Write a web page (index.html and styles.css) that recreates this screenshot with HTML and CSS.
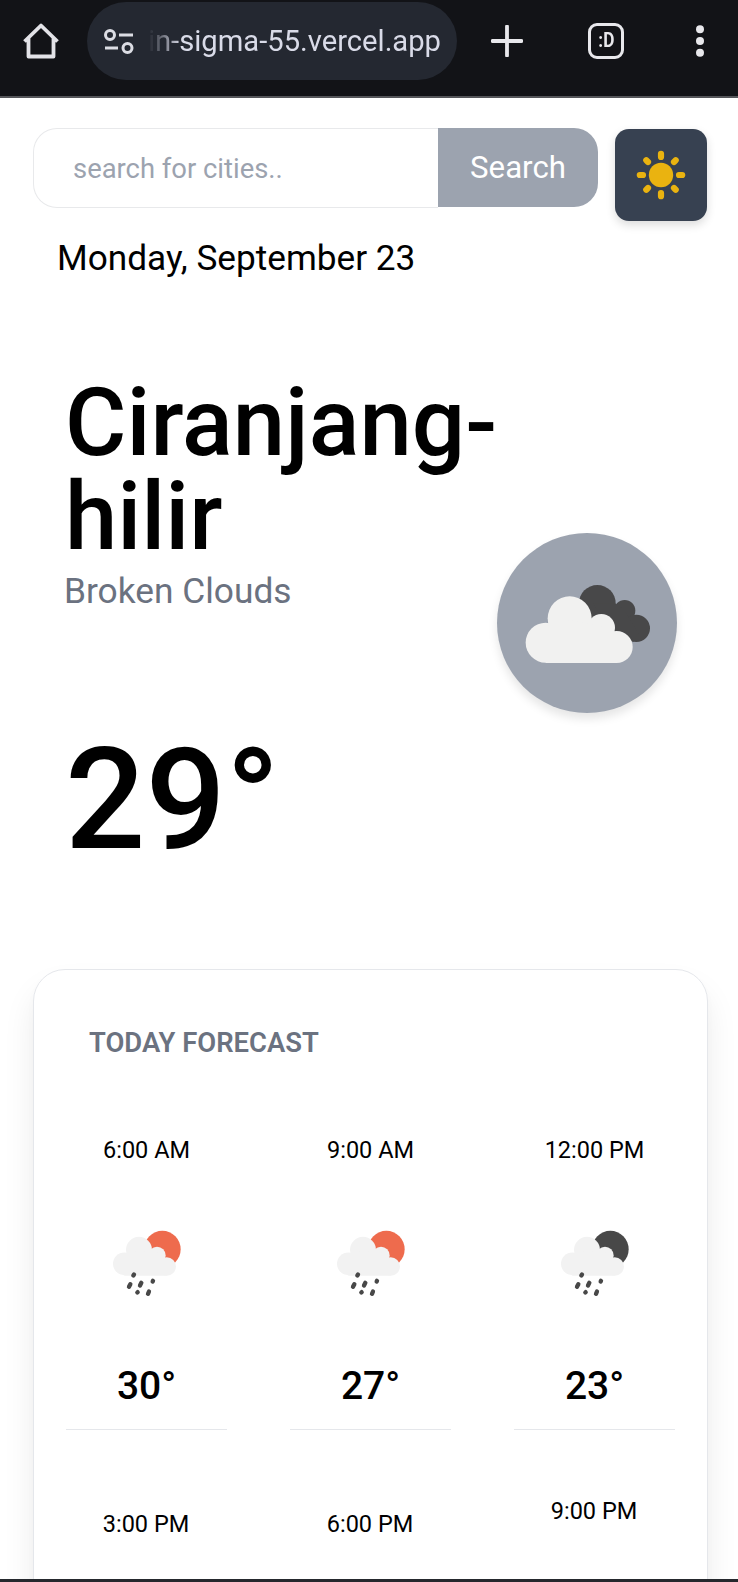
FILE: index.html
```html
<!DOCTYPE html>
<html lang="en">
<head>
<meta charset="utf-8">
<title>Weather</title>
<link rel="stylesheet" href="styles.css">
</head>
<body>
<svg width="0" height="0" class="defs">
  <defs>
    <g id="raincloud">
      <g fill="#f2f2f2">
        <circle cx="222" cy="189" r="34"/><circle cx="266" cy="147" r="39"/><circle cx="320" cy="164" r="26"/><circle cx="349" cy="197" r="28"/>
        <path d="M222 223V165L266 150L320 155L349 180V225H222z"/>
      </g>
      <g stroke="#484848" stroke-linecap="round" stroke-width="13">
        <path d="M249 224l2-3M236 258l4-8M269 254l4-8M307 242l1-2M261 275l1-1M293 279l3-7"/>
      </g>
    </g>
  </defs>
</svg>
<div class="screen">
  <header class="browser">
    <svg class="home" width="38" height="38" viewBox="0 0 38 38"><path d="M2.500 19.500L19 3.500L35.500 19.500M6.500 16V34.500H31.500V16" fill="none" stroke="#e3e3e8" stroke-width="3.800" stroke-linejoin="round"/></svg>
    <div class="pill">
      <svg class="tune" width="30" height="26" viewBox="0 0 30 26" fill="none" stroke="#dcdde4" stroke-width="3"><circle cx="6" cy="6" r="4.500"/><path d="M15 6H29M1 19H14"/><circle cx="23.500" cy="19" r="4.500"/></svg>
      <div class="url"><span>in-sigma-55.vercel.app</span></div>
    </div>
    <svg class="plus" width="32" height="32" viewBox="0 0 32 32"><path d="M16 1.500V30.500M1.500 16H30.500" stroke="#e8e8ec" stroke-width="3.800" stroke-linecap="round"/></svg>
    <div class="tabs"><span>:D</span></div>
    <svg class="dots" width="10" height="34" viewBox="0 0 10 34" fill="#e8e8ec"><circle cx="5" cy="5.300" r="4"/><circle cx="5" cy="17" r="4"/><circle cx="5" cy="28.700" r="4"/></svg>
  </header>

  <main class="page">
    <div class="toolbar">
      <form class="search">
        <input class="search-input" type="text" placeholder="search for cities..">
        <button class="search-button" type="button">Search</button>
      </form>
      <button class="theme" type="button">
        <svg width="50" height="50" viewBox="-25 -25 50 50"><circle r="12.200" fill="#eab310"/><path d="M0-21.200V-18M0 21.200V18M-21.200 0H-18M21.200 0H18M-14.700-14.700L-13-13M14.700-14.700L13-13M-14.700 14.700L-13 13M14.700 14.700L13 13" stroke="#eab310" stroke-width="6.200" stroke-linecap="round"/></svg>
      </button>
    </div>
    <p class="date">Monday, September 23</p>

    <section class="current">
      <div>
        <h1 class="city">Ciranjang-<br>hilir</h1>
        <p class="condition">Broken Clouds</p>
        <p class="degrees">29°</p>
      </div>
      <div class="badge">
        <svg width="180" height="180" viewBox="51 39 540 540">
          <g fill="#484849"><circle cx="352" cy="250" r="55"/><circle cx="434" cy="272" r="32"/><circle cx="469" cy="325" r="41"/><path d="M340 250H405L434 272L475 340L460 366L380 320z"/></g>
          <g fill="#f1f1f0"><circle cx="197" cy="368" r="60"/><circle cx="269" cy="295" r="66"/><circle cx="364" cy="323" r="41"/><circle cx="410" cy="381" r="48"/><path d="M197 428V320L269 300L364 320L410 350V429H197z"/></g>
        </svg>
      </div>
    </section>

    <section class="forecast">
      <h2 class="forecast-title">TODAY FORECAST</h2>
      <div class="hours">
        <div class="hour">
          <span class="time">6:00 AM</span>
          <svg class="icon" width="68" height="67" viewBox="188 88 204 200"><circle cx="336" cy="145" r="55" fill="#ee6b4d"/><use href="#raincloud"/></svg>
          <span class="temp">30°</span>
        </div>
        <div class="hour">
          <span class="time">9:00 AM</span>
          <svg class="icon" width="68" height="67" viewBox="188 88 204 200"><circle cx="336" cy="145" r="55" fill="#ee6b4d"/><use href="#raincloud"/></svg>
          <span class="temp">27°</span>
        </div>
        <div class="hour">
          <span class="time">12:00 PM</span>
          <svg class="icon" width="68" height="67" viewBox="188 88 204 200"><circle cx="336" cy="145" r="55" fill="#484848"/><use href="#raincloud"/></svg>
          <span class="temp">23°</span>
        </div>
        <div class="later">3:00 PM</div>
        <div class="later">6:00 PM</div>
        <div class="later last">9:00 PM</div>
      </div>
    </section>
  </main>
  <div class="bottom-edge"></div>
</div>
</body>
</html>
```
FILE: styles.css
```css
* { box-sizing: border-box; }
body, h1, h2, p { margin: 0; }
body { font-family: Roboto, "Noto Sans", sans-serif; color: #000; background: #fff; overflow: hidden; }
.defs { position: absolute; }
button, input { font-family: inherit; }

.screen { width: 738px; height: 1582px; display: flex; flex-direction: column; overflow: hidden; }

.browser { flex: none; height: 98px; background: #121317; border-bottom: 2px solid #55565a; display: flex; align-items: flex-start; }
.home { margin: 22px 0 0 22px; }
.pill { width: 370px; height: 78px; margin: 2px 0 0 27px; border-radius: 39px; background: #242831; display: flex; align-items: flex-start; }
.tune { margin: 27px 0 0 17px; }
.url { width: 292px; margin-left: 15px; height: 78px; overflow: hidden; display: flex; justify-content: flex-end; font-size: 29.2px; line-height: 79px; color: #d9dbe8; white-space: nowrap; -webkit-mask-image: linear-gradient(90deg, transparent, #000 32px); mask-image: linear-gradient(90deg, transparent, #000 32px); }
.plus { margin: 25px 0 0 34px; }
.tabs { width: 36px; height: 36px; margin: 23px 0 0 65px; border: 3.5px solid #e8e8ec; border-radius: 9px; color: #e8e8ec; font-size: 20px; font-weight: 700; line-height: 28px; text-align: center; }
.tabs span { display: inline-block; transform: scaleX(.86); }
.dots { margin: 24px 0 0 71px; }

.page { flex: 1; min-height: 0; overflow: hidden; padding: 30px 31px 0 33px; display: flex; flex-direction: column; }
.toolbar { display: flex; justify-content: space-between; align-items: flex-start; height: 92px; flex: none; }
.search { display: flex; width: 565px; height: 80px; }
.search-input { width: 405px; min-width: 0; padding: 1px 0 0 39px; border: 1.5px solid #e8e9eb; border-right: 0; border-radius: 24px 0 0 24px; background: #fff; font-size: 27.4px; outline: none; }
.search-input::placeholder { color: #9ca3af; opacity: 1; }
.search-button { width: 160px; height: 79px; padding: 0; border: 0; border-radius: 0 24px 24px 0; background: #9ca3af; color: #fff; font-size: 31.2px; }
.theme { width: 92px; height: 92px; margin-top: 0.5px; padding: 0; border: 0; border-radius: 14px; background: #374151; box-shadow: 0 4px 10px rgba(0, 0, 0, .14); display: flex; align-items: center; justify-content: center; }

.date { flex: none; margin: 14px 0 0 24px; font-size: 35.2px; line-height: 48px; }

.current { flex: none; margin-top: 94px; padding: 0 31px; display: flex; align-items: center; justify-content: space-between; }
.city { margin-left: 1px; font-size: 94.1px; line-height: 94px; font-weight: 500; }
.condition { font-size: 35.3px; line-height: 54px; color: #6b7280; }
.degrees { margin: 111px 0 0 1px; font-size: 141.5px; line-height: 142px; font-weight: 500; }
.badge { width: 180px; height: 180px; margin-bottom: 1px; border-radius: 50%; background: #9ca3af; box-shadow: 0 6px 10px rgba(0, 0, 0, .1); }
.badge svg { display: block; }

.forecast { flex: none; width: 675px; height: 760px; margin-top: 98px; padding-top: 53px; border: 1px solid #e5e7eb; border-radius: 32px; box-shadow: 0 20px 32px rgba(0, 0, 0, .08), 0 4px 10px rgba(0, 0, 0, .02); }
.forecast-title { margin-left: 55px; font-size: 27.4px; line-height: 40px; font-weight: 600; color: #6b7280; }
.hours { margin-top: 71px; display: grid; grid-template-columns: repeat(3, 224px); }
.hour { height: 296px; margin: 0 31px 0 32px; border-bottom: 1.5px solid #e5e7eb; display: flex; flex-direction: column; align-items: center; }
.time { font-size: 23.5px; line-height: 32px; }
.icon { margin: 64px 0 61px 1px; }
.temp { font-size: 39px; line-height: 56px; font-weight: 500; }
.later { margin-top: 78px; text-align: center; font-size: 23.5px; line-height: 32px; }
.last { margin-top: 65px; }
.bottom-edge { flex: none; height: 3px; background: #25282d; }
```
